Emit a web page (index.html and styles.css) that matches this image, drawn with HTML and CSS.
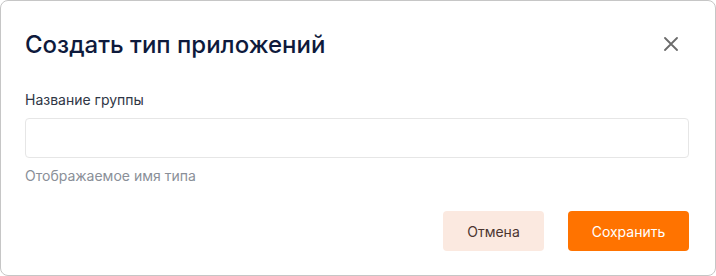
FILE: index.html
```html
<!DOCTYPE html>
<html lang="ru">
<head>
<meta charset="utf-8">
<link rel="stylesheet" href="styles.css">
</head>
<body>
<div class="dialog">
  <div class="header">
    <h1 class="title">Создать тип приложений</h1>
    <button class="close" aria-label="Закрыть">
      <svg width="14" height="14" viewBox="0 0 14 14"><path d="M1 1L13 13M13 1L1 13" stroke="#6b6b6b" stroke-width="1.8" stroke-linecap="round"/></svg>
    </button>
  </div>
  <div class="field">
    <label class="label">Название группы</label>
    <input class="input" type="text">
    <div class="hint">Отображаемое имя типа</div>
  </div>
  <div class="footer">
    <button class="btn btn-cancel">Отмена</button>
    <button class="btn btn-save">Сохранить</button>
  </div>
</div>
</body>
</html>
```
FILE: styles.css
```css
* { box-sizing: border-box; }
html, body { margin: 0; padding: 0; background: #fff; }
body { font-family: Inter, "Noto Sans", sans-serif; }
.dialog {
  width: 716px;
  height: 276px;
  border: 1px solid #c6c6c6;
  border-radius: 8px;
  padding: 25px 26px 0 24px;
  background: #fff;
}
.header {
  display: flex;
  justify-content: space-between;
  align-items: center;
  height: 36px;
}
.title {
  margin: 0;
  font-size: 24px;
  font-weight: 500;
  color: #0e1a3c;
  letter-spacing: 0;
}
.close {
  border: 0;
  background: none;
  padding: 0;
  width: 14px;
  height: 14px;
  margin-right: 11px;
  display: flex;
}
.field {
  margin-top: 28px;
  display: flex;
  flex-direction: column;
}
.label {
  font-size: 14px;
  color: #2f3645;
  line-height: 20px;
}
.input {
  margin-top: 8px;
  height: 40px;
  width: 664px;
  border: 1px solid #e6e6e6;
  border-radius: 4px;
  font: inherit;
}
.hint {
  margin-top: 8px;
  font-size: 14px;
  line-height: 20px;
  color: #8a8f98;
}
.footer {
  display: flex;
  justify-content: flex-end;
  gap: 24px;
  margin-top: 25px;
  padding-right: 0;
  width: 664px;
}
.btn {
  height: 40px;
  border: 0;
  border-radius: 4px;
  font-family: inherit;
  font-size: 14px;
  font-weight: 400;
  padding: 0 20px;
}
.btn-cancel {
  background: #fbe9e0;
  color: #4b3530;
  width: 101px;
}
.btn-save {
  background: #ff7300;
  color: #fff;
  width: 121px;
}
```
